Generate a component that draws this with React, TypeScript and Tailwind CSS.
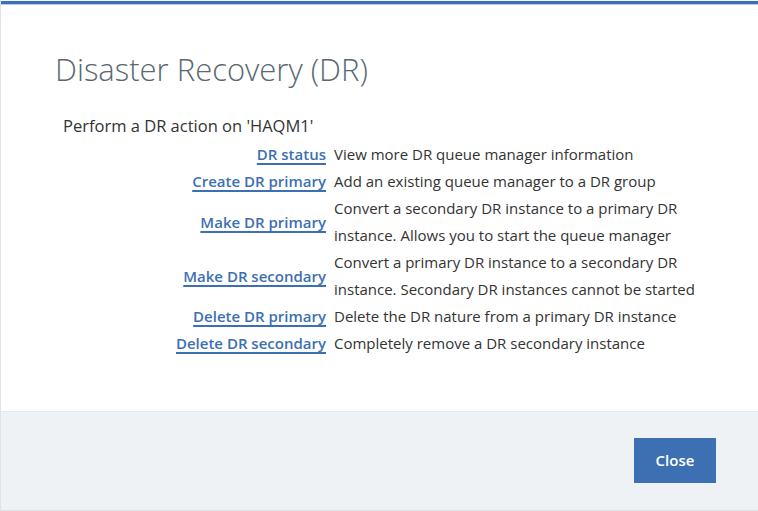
import React from 'react';

const actions = [
  { label: 'DR status', text: 'View more DR queue manager information' },
  { label: 'Create DR primary', text: 'Add an existing queue manager to a DR group' },
  {
    label: 'Make DR primary',
    text: 'Convert a secondary DR instance to a primary DR instance. Allows you to start the queue manager',
  },
  {
    label: 'Make DR secondary',
    text: 'Convert a primary DR instance to a secondary DR instance. Secondary DR instances cannot be started',
  },
  { label: 'Delete DR primary', text: 'Delete the DR nature from a primary DR instance' },
  { label: 'Delete DR secondary', text: 'Completely remove a DR secondary instance' },
];

export default function App() {
  return (
    <div
      className="w-[758px] h-[511px] bg-white overflow-hidden"
      style={{ fontFamily: '"Open Sans", "Noto Sans", sans-serif' }}
    >
      <div className="h-full flex flex-col border-l border-[#dfe3e6] border-b">
        {/* top accent */}
        <div className="h-[1px] bg-[#f4f6f8]" />
        <div className="h-[3px] bg-[#3d70b2]" />
        <div className="h-[1px] bg-[#b7cbe6]" />

        {/* body */}
        <div className="flex-1 pl-[54px] pt-[45px]">
          <h2 className="text-[31px] leading-[38px] font-light text-[#5a6872]">
            Disaster Recovery (DR)
          </h2>
          <p className="mt-[27px] ml-[8px] text-[16.5px] leading-[22px] text-[#333]">
            Perform a DR action on 'HAQM1'
          </p>
          <div className="mt-[4px] grid grid-cols-[271px_372px] gap-x-[8px] text-[15px] leading-[27px]">
            {actions.map((a) => (
              <React.Fragment key={a.label}>
                <div className="flex items-center justify-end">
                  <a
                    href="#"
                    className="font-semibold text-[#3d70b2] underline underline-offset-[3px] decoration-[1.5px] [text-decoration-skip-ink:none]"
                  >
                    {a.label}
                  </a>
                </div>
                <div className="text-[#333]">{a.text}</div>
              </React.Fragment>
            ))}
          </div>
        </div>

        {/* footer */}
        <div className="h-[99px] bg-[#eef2f5] border-t border-[#e4e8eb] flex justify-end items-start pt-[26px] pr-[42px]">
          <button className="w-[82px] h-[45px] bg-[#3d70b2] text-white text-[15px] font-semibold">
            Close
          </button>
        </div>
      </div>
    </div>
  );
}
